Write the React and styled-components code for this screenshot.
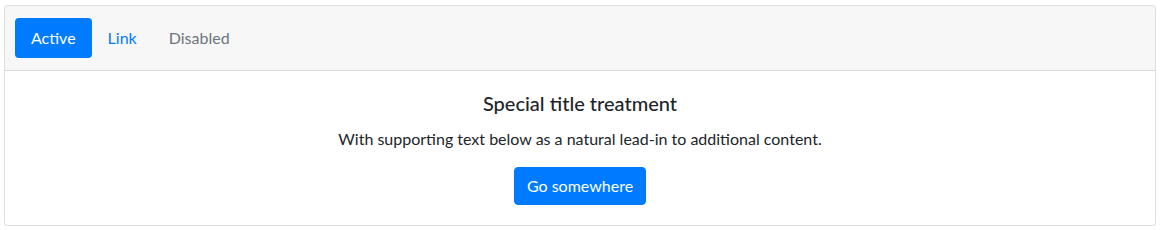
import React from "react";
import styled, { createGlobalStyle } from "styled-components";

const GlobalStyle = createGlobalStyle`
  * { box-sizing: border-box; }
  body {
    margin: 0;
    font-family: "Segoe UI", Lato, "Noto Sans", sans-serif;
    font-size: 16px;
    line-height: 1.5;
    color: #212529;
    background: #fff;
  }
`;

const Page = styled.div`
  padding: 5px 5px 5px 4px;
`;

const Card = styled.div`
  display: flex;
  flex-direction: column;
  border: 1px solid rgba(0, 0, 0, 0.125);
  border-radius: 4px;
  background: #fff;
  text-align: center;
  overflow: hidden;
`;

const CardHeader = styled.div`
  padding: 12px 20px;
  background-color: rgba(0, 0, 0, 0.03);
  border-bottom: 1px solid rgba(0, 0, 0, 0.125);
`;

const Pills = styled.ul`
  display: flex;
  list-style: none;
  margin: 0 -10px;
  padding: 0;
`;

const PillLink = styled.a`
  display: block;
  padding: 8px 16px;
  border-radius: 4px;
  text-decoration: none;
  color: ${(p) => (p.$disabled ? "#6c757d" : p.$active ? "#fff" : "#007bff")};
  background: ${(p) => (p.$active ? "#007bff" : "transparent")};
  cursor: ${(p) => (p.$disabled ? "default" : "pointer")};
`;

const CardBody = styled.div`
  padding: 20px;
`;

const Title = styled.h5`
  margin: 0 0 12px;
  font-size: 20px;
  font-weight: 500;
  line-height: 1.2;
`;

const Text = styled.p`
  margin: 0 0 16px;
`;

const Button = styled.a`
  display: inline-block;
  padding: 6px 12px;
  font-size: 16px;
  line-height: 1.5;
  color: #fff;
  background-color: #007bff;
  border: 1px solid #007bff;
  border-radius: 4px;
  text-decoration: none;
`;

export default function App() {
  return (
    <>
      <GlobalStyle />
      <Page>
        <Card>
          <CardHeader>
            <Pills>
              <li><PillLink $active>Active</PillLink></li>
              <li><PillLink>Link</PillLink></li>
              <li><PillLink $disabled>Disabled</PillLink></li>
            </Pills>
          </CardHeader>
          <CardBody>
            <Title>Special title treatment</Title>
            <Text>With supporting text below as a natural lead-in to additional content.</Text>
            <Button>Go somewhere</Button>
          </CardBody>
        </Card>
      </Page>
    </>
  );
}
